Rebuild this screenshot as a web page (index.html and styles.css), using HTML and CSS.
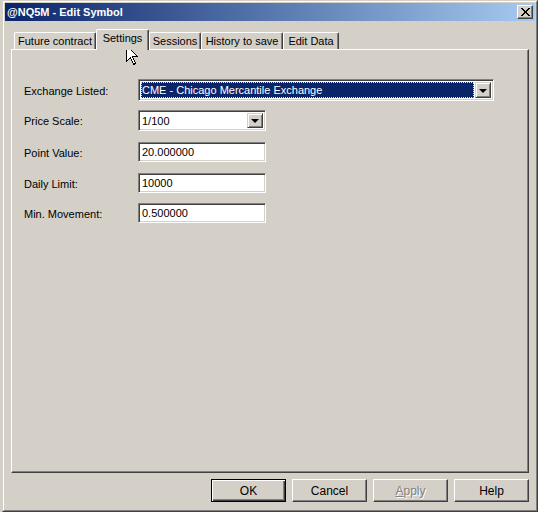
FILE: index.html
```html
<!DOCTYPE html>
<html>
<head>
<meta charset="utf-8">
<link rel="stylesheet" href="styles.css">
</head>
<body>
<div class="window">
  <div class="frame">
    <div class="titlebar">
      <span class="title">@NQ5M - Edit Symbol</span>
      <span class="close">
        <svg width="9" height="8" viewBox="0 0 9 8"><path d="M0 0 L2 0 L4.5 3 L7 0 L9 0 L5.5 4 L9 8 L7 8 L4.5 5 L2 8 L0 8 L3.5 4 Z" fill="#000" shape-rendering="crispEdges"/></svg>
      </span>
    </div>
    <div class="tabs">
      <div class="tab t-future">Future contract</div>
      <div class="tab t-settings active">Settings</div>
      <div class="tab t-sessions">Sessions</div>
      <div class="tab t-history">History to save</div>
      <div class="tab t-edit">Edit Data</div>
    </div>
    <div class="panel">
      <div class="form">
        <div class="row r1">
          <span class="label">Exchange Listed:</span>
          <div class="combo wide">
            <div class="combo-value selected"><span class="focus">CME - Chicago Mercantile Exchange</span></div>
            <div class="drop"><span class="arrow"></span></div>
          </div>
        </div>
        <div class="row r2">
          <span class="label">Price Scale:</span>
          <div class="combo narrow">
            <div class="combo-value">1/100</div>
            <div class="drop"><span class="arrow"></span></div>
          </div>
        </div>
        <div class="row r3">
          <span class="label">Point Value:</span>
          <div class="field">20.000000</div>
        </div>
        <div class="row r4">
          <span class="label">Daily Limit:</span>
          <div class="field">10000</div>
        </div>
        <div class="row r5">
          <span class="label">Min. Movement:</span>
          <div class="field">0.500000</div>
        </div>
      </div>
    </div>
    <div class="buttons">
      <div class="btn default">OK</div>
      <div class="btn">Cancel</div>
      <div class="btn disabled"><u>A</u>pply</div>
      <div class="btn">Help</div>
    </div>
  </div>
</div>
<svg class="cursor" width="13" height="21" viewBox="0 0 13 21">
  <path d="M0.5 0.5 L0.5 16.5 L4.5 12.5 L7.5 19.5 L9.5 18.5 L6.5 11.5 L11.5 11.5 Z" fill="#fff" stroke="#000" stroke-width="1" shape-rendering="crispEdges"/>
</svg>
</body>
</html>
```

FILE: styles.css
```css
html, body {
  margin: 0;
  padding: 0;
}
body {
  background: #d4d0c8;
  width: 538px;
  height: 512px;
  overflow: hidden;
  font-family: "Liberation Sans", Arial, sans-serif;
  font-size: 11px;
  color: #000;
  position: relative;
}
.window {
  margin-left: 2px;
  width: 536px;
  height: 512px;
  box-sizing: border-box;
  border: 1px solid;
  border-color: #d4d0c8 #404040 #404040 #d4d0c8;
  background: #d4d0c8;
}
.frame {
  height: 100%;
  box-sizing: border-box;
  border: 1px solid;
  border-color: #fff #808080 #808080 #fff;
  padding: 1px;
}
.titlebar {
  height: 18px;
  display: flex;
  align-items: center;
  justify-content: space-between;
  padding: 0 2px 0 2px;
  background: linear-gradient(to right, #0a246a, #a6caf0);
}
.title {
  color: #fff;
  font-weight: bold;
  font-size: 11px;
}
.close {
  width: 16px;
  height: 14px;
  box-sizing: border-box;
  background: #d4d0c8;
  border: 1px solid;
  border-color: #fff #404040 #404040 #fff;
  box-shadow: inset -1px -1px #808080;
  display: flex;
  align-items: center;
  justify-content: center;
}
.close svg { display: block; }
.tabs {
  display: flex;
  align-items: flex-end;
  height: 20px;
  padding-top: 8px;
  padding-left: 9px;
  position: relative;
  z-index: 2;
}
.tab {
  height: 17px;
  box-sizing: border-box;
  border-top: 1px solid #fff;
  border-left: 1px solid #fff;
  border-right: 1px solid #404040;
  box-shadow: inset -1px 0 #808080;
  border-radius: 2px 2px 0 0;
  display: flex;
  align-items: center;
  justify-content: center;
  padding-bottom: 1px;
  white-space: nowrap;
}
.tab.active {
  height: 21px;
  margin-bottom: -1px;
  background: #d4d0c8;
  padding-bottom: 5px;
}
.t-future { width: 82px; }
.t-settings { width: 53px; }
.t-sessions { width: 52px; }
.t-history { width: 82px; }
.t-edit { width: 56px; }
.panel {
  margin: 0 6px;
  height: 424px;
  box-sizing: border-box;
  border: 1px solid;
  border-color: #fff #404040 #404040 #fff;
  box-shadow: inset -1px -1px #808080;
  padding: 29px 12px 0 12px;
  position: relative;
  z-index: 1;
}
.form {
  display: flex;
  flex-direction: column;
}
.row {
  display: flex;
  align-items: center;
}
.r1 { height: 22px; }
.r2 { height: 21px; margin-top: 9px; }
.r3 { height: 20px; margin-top: 11px; }
.r4 { height: 20px; margin-top: 11px; }
.r5 { height: 20px; margin-top: 10px; }
.label {
  width: 114px;
  flex: none;
  padding-top: 1px;
}
.combo, .field {
  box-sizing: border-box;
  height: 100%;
  background: #fff;
  border: 1px solid;
  border-color: #808080 #fff #fff #808080;
  box-shadow: inset 1px 1px #404040, inset -1px -1px #d4d0c8;
}
.combo {
  display: flex;
  align-items: stretch;
  padding: 2px;
}
.combo.wide { width: 356px; }
.combo.narrow { width: 128px; }
.combo-value {
  flex: 1;
  display: flex;
  align-items: center;
  padding-left: 1px;
}
.combo-value.selected {
  background: #0a246a;
  color: #fff;
  padding: 0;
  margin-right: 1px;
}
.focus {
  flex: 1;
  align-self: stretch;
  display: flex;
  align-items: center;
  padding-left: 1px;
  outline: 1px dotted #f0e68c;
  outline-offset: -1px;
}
.drop {
  width: 16px;
  box-sizing: border-box;
  background: #d4d0c8;
  border: 1px solid;
  border-color: #d4d0c8 #404040 #404040 #d4d0c8;
  box-shadow: inset 1px 1px #fff, inset -1px -1px #808080;
  display: flex;
  align-items: center;
  justify-content: center;
}
.arrow {
  width: 0;
  height: 0;
  border-left: 4px solid transparent;
  border-right: 4px solid transparent;
  border-top: 4px solid #000;
  margin-top: 1px;
}
.field {
  width: 128px;
  display: flex;
  align-items: center;
  padding-left: 3px;
}
.buttons {
  display: flex;
  justify-content: flex-end;
  gap: 6px;
  margin-top: 6px;
  margin-right: 6px;
}
.btn {
  width: 75px;
  height: 23px;
  box-sizing: border-box;
  border: 1px solid;
  border-color: #fff #404040 #404040 #fff;
  box-shadow: inset -1px -1px #808080;
  display: flex;
  align-items: center;
  justify-content: center;
  font-size: 12px;
}
.btn.default {
  border: 1px solid #000;
  box-shadow: inset 1px 1px #fff, inset -1px -1px #404040, inset -2px -2px #808080;
}
.btn.disabled {
  color: #808080;
  text-shadow: 1px 1px #fff;
}
.cursor {
  position: absolute;
  left: 126px;
  top: 45px;
}
```
